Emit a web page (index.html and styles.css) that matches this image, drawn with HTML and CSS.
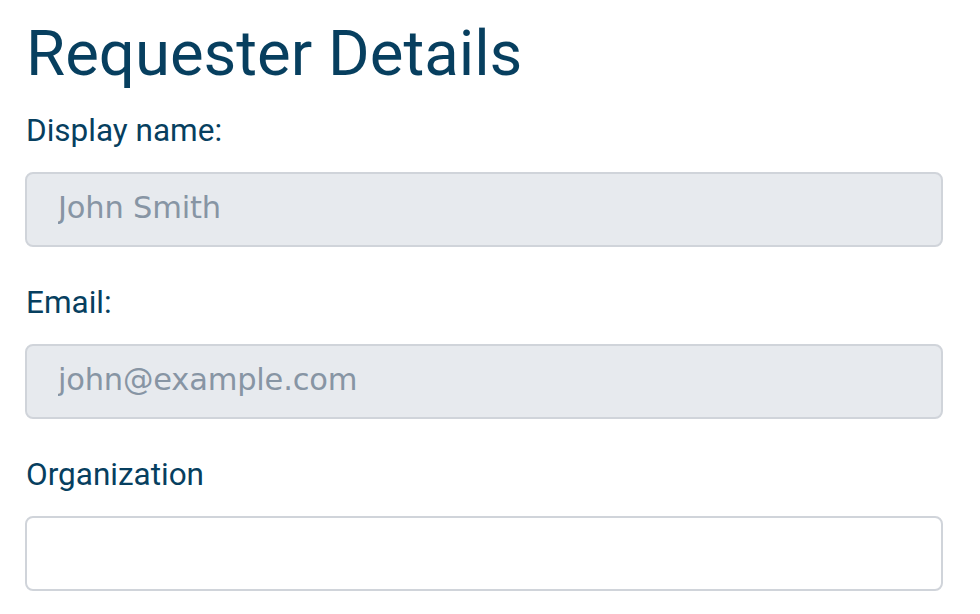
FILE: index.html
```html
<!DOCTYPE html>
<html lang="en">
<head>
<meta charset="utf-8">
<title>Requester Details</title>
<link rel="stylesheet" href="styles.css">
</head>
<body>
<main class="panel">
  <h1 class="title">Requester Details</h1>
  <div class="field">
    <label class="label" for="dn">Display name:</label>
    <input class="input input-disabled" id="dn" type="text" value="John Smith" disabled>
  </div>
  <div class="field">
    <label class="label" for="em">Email:</label>
    <input class="input input-disabled" id="em" type="text" value="john@example.com" disabled>
  </div>
  <div class="field">
    <label class="label" for="org">Organization</label>
    <input class="input" id="org" type="text">
  </div>
</main>
</body>
</html>
```
FILE: styles.css
```css
html, body {
  margin: 0;
  padding: 0;
  background: #ffffff;
}
body {
  font-family: Roboto, "Liberation Sans", sans-serif;
  color: #073f5f;
}
.panel {
  padding: 16px 37px 0 25px;
  display: flex;
  flex-direction: column;
  gap: 39px;
}
.title {
  margin: 0 0 -17px 0;
  font-size: 63.5px;
  line-height: 76px;
  font-weight: 400;
  color: #073f5f;
  padding-left: 1px;
}
.field {
  display: flex;
  flex-direction: column;
}
.label {
  font-size: 31.5px;
  line-height: 34px;
  margin-bottom: 24px;
  padding-left: 1px;
  color: #073f5f;
}
.input {
  box-sizing: border-box;
  width: 100%;
  height: 75px;
  margin: 0;
  padding: 0 0 4px 31px;
  border: 2px solid #d0d4da;
  border-radius: 8px;
  background: #ffffff;
  font-family: "DejaVu Sans", Verdana, sans-serif;
  font-size: 30.5px;
  letter-spacing: -0.2px;
  color: #8795a4;
  outline: none;
}
.input-disabled {
  background: #e7eaee;
  color: #8795a4;
  -webkit-text-fill-color: #8795a4;
  opacity: 1;
}
```
